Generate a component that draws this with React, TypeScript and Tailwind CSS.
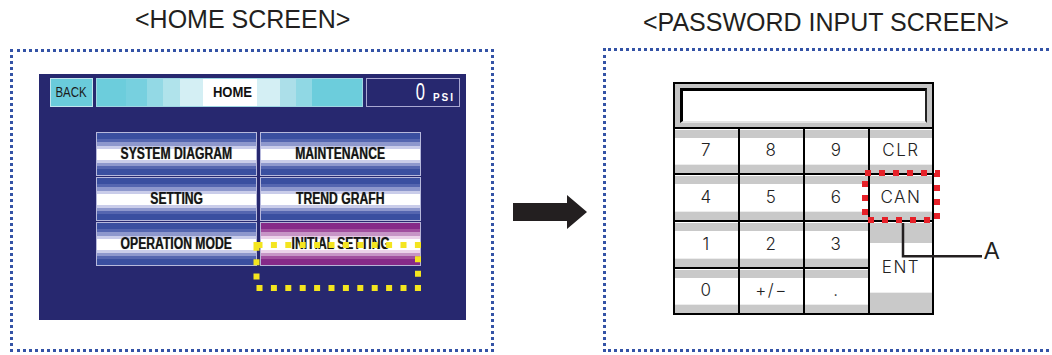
const MENU = [
  { label: 'SYSTEM DIAGRAM', active: false },
  { label: 'MAINTENANCE', active: false },
  { label: 'SETTING', active: false },
  { label: 'TREND GRAFH', active: false },
  { label: 'OPERATION MODE', active: false },
  { label: 'INITIAL SETTING', active: true },
]

const KEYS = ['7', '8', '9', 'CLR', '4', '5', '6', 'CAN', '1', '2', '3', 'ENT', '0', '+/−', '.']

const sans = "font-['Liberation_Sans',Arial,sans-serif]"

function MenuButton({ label, active }: { label: string; active: boolean }) {
  return (
    <div
      className={
        active
          ? 'h-[44px] border border-[#b7b3d6] flex items-center justify-center bg-[linear-gradient(to_bottom,#862a88_0,#862a88_6px,#a14f9f_6px,#a14f9f_9px,#c795c6_9px,#c795c6_13px,#ecd3ea_13px,#ecd3ea_16px,#fff_16px,#fff_27px,#ecd3ea_27px,#ecd3ea_30px,#c795c6_30px,#c795c6_33px,#a14f9f_33px,#a14f9f_36px,#862a88_36px)]'
          : 'h-[44px] border border-[#b7b9dc] flex items-center justify-center bg-[linear-gradient(to_bottom,#3a4fa0_0,#3a4fa0_6px,#5566b0_6px,#5566b0_9px,#8e98cd_9px,#8e98cd_13px,#cacdea_13px,#cacdea_16px,#fff_16px,#fff_27px,#cacdea_27px,#cacdea_30px,#8e98cd_30px,#8e98cd_33px,#5566b0_33px,#5566b0_36px,#3a4fa0_36px)]'
      }
    >
      <span className={`${sans} inline-block scale-x-[0.76] text-[16px] font-bold text-[#141414] [text-shadow:0_0_1px_rgba(0,0,0,0.45)]`}>
        {label}
      </span>
    </div>
  )
}

function Key({ label }: { label: string }) {
  const tall = label === 'ENT'
  return (
    <div className={`flex flex-col bg-white pt-[1px] ${tall ? 'row-span-2' : ''}`}>
      <div className={`${tall ? 'h-[20px]' : 'h-[8px]'} bg-[#c9c9c9]`} />
      <div className="flex-1 flex items-center justify-center font-['Inter',sans-serif] font-light text-[17px] tracking-[1.5px] text-[#222]">
        {label}
      </div>
      <div className={`${tall ? 'h-[21px]' : 'h-[9px]'} bg-[#c9c9c9] border-t border-[#ededed]`} />
    </div>
  )
}

export default function App() {
  return (
    <div className={`${sans} w-[1052px] h-[355px] overflow-hidden bg-white flex text-[#231f20]`}>
      {/* Home screen */}
      <div className="ml-[10px] w-[484px] shrink-0 flex flex-col">
        <div className="h-[49px] pt-[5px] pl-[125px] text-[25px] leading-[28px] whitespace-nowrap">&lt;HOME SCREEN&gt;</div>
        <div className="h-[303px] border-[3px] border-dotted border-[#3453a6] pl-[26px] pt-[22px]">
          <div className="relative w-[427px] h-[246px] bg-[#27286f]">
            {/* Header */}
            <div className="ml-[11px] pt-[4px] flex gap-[3px] h-[33px]">
              <div className="w-[43px] bg-[#6acbdb] border border-[#c2e6ee] flex items-center justify-center">
                <span className="inline-block scale-x-[0.82] text-[14px] text-[#1b1b1b]">BACK</span>
              </div>
              <div className="w-[267px] border border-[#9fd6e2] flex items-center justify-center bg-[linear-gradient(to_right,#6ccddc_0%,#6ccddc_11%,#77d0df_11%,#77d0df_19%,#93d9e5_19%,#93d9e5_25%,#b0e3eb_25%,#b0e3eb_31.5%,#d4eff4_31.5%,#d4eff4_40%,#fff_40%,#fff_60.5%,#d4eff4_60.5%,#d4eff4_69%,#acdfe9_69%,#acdfe9_75%,#90d8e4_75%,#90d8e4_81%,#6ccddc_81%)]">
                <span className="inline-block scale-x-[0.87] text-[15px] font-bold text-[#111] translate-x-[3px]">HOME</span>
              </div>
              <div className="w-[94px] border border-[#a9a8d2] flex items-end justify-end pr-[4px] pb-[3px] gap-[6px] text-white">
                <span className="inline-block scale-x-[0.72] text-[23px] leading-[22px]">0</span>
                <span className="text-[10px] leading-[10px] font-bold tracking-[2px]">PSI</span>
              </div>
            </div>

            {/* Menu */}
            <div className="ml-[57px] mt-[25px] grid grid-cols-[161px_161px] gap-x-[3px] gap-y-[1px] w-fit">
              {MENU.map(m => (
                <MenuButton key={m.label} label={m.label} active={m.active} />
              ))}
            </div>

            <svg className="absolute left-0 top-0 pointer-events-none" width="427" height="246">
              <rect x="217.5" y="171" width="161.5" height="43" fill="none" stroke="#f4e51f" strokeWidth="6" strokeDasharray="6 8.4" />
            </svg>
          </div>
        </div>
      </div>

      {/* Arrow */}
      <svg className="ml-[19px] mt-[195px] shrink-0" width="74" height="34" viewBox="0 0 74 34">
        <path d="M0 8H54V0L74 17L54 34V26H0Z" fill="#231f20" />
      </svg>

      {/* Password input screen */}
      <div className="ml-[16px] w-[452px] shrink-0 flex flex-col">
        <div className="h-[48px] pt-[8px] pl-[40px] text-[25px] leading-[28px] whitespace-nowrap">&lt;PASSWORD INPUT SCREEN&gt;</div>
        <div className="h-[304px] border-[3px] border-dotted border-[#3453a6] pl-[67px] pt-[31px]">
          <div className="relative w-fit">
            <div className="grid grid-cols-[63px_63px_63px_62px] grid-rows-[43px_44px_45px_45px_44px] gap-[2px] bg-black p-[2px]">
              <div className="col-span-4 bg-[#c4c4c4] px-[5px] py-[4px]">
                <div className="h-full bg-white border-t-[3px] border-l-[3px] border-r-[2px] border-b-[2px] border-t-black border-l-black border-r-[#222] border-b-[#e4e4e4]" />
              </div>
              {KEYS.map(k => (
                <Key key={k} label={k} />
              ))}
            </div>

            <svg className="absolute left-0 top-0 overflow-visible pointer-events-none" width="340" height="240">
              <rect x="192" y="91" width="72" height="47" fill="none" stroke="#e62129" strokeWidth="6" strokeDasharray="6 8" />
              <path d="M230 141V174.3H309" fill="none" stroke="#231f20" strokeWidth="2.5" />
            </svg>
            <span className="absolute left-[311px] top-[158px] text-[23px] leading-[23px]">A</span>
          </div>
        </div>
      </div>
    </div>
  )
}
